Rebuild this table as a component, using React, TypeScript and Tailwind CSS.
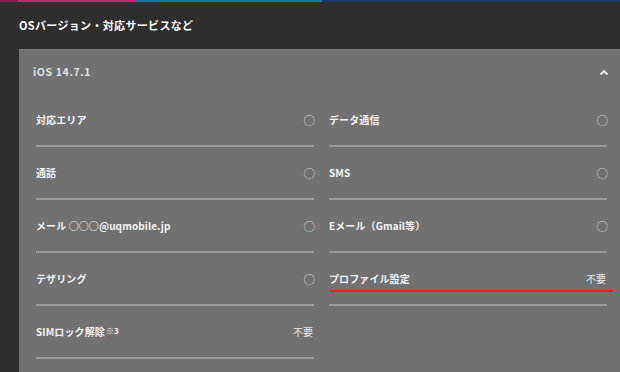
const FONT = { fontFamily: '"Noto Sans CJK JP", "Noto Sans", sans-serif' };

type Item = { label: React.ReactNode; value: string; mark?: boolean };

const ITEMS: Item[] = [
  { label: '対応エリア', value: '○' },
  { label: 'データ通信', value: '○' },
  { label: '通話', value: '○' },
  { label: 'SMS', value: '○' },
  { label: 'メール ○○○@uqmobile.jp', value: '○' },
  { label: 'Eメール（Gmail等）', value: '○' },
  { label: 'テザリング', value: '○' },
  { label: 'プロファイル設定', value: '不要', mark: true },
  {
    label: (
      <>
        SIMロック解除<sup className="text-[8px] relative -top-[2px] ml-[1px]">※3</sup>
      </>
    ),
    value: '不要',
  },
];

function Row({ item }: { item: Item }) {
  const isMark = item.value === '○';
  return (
    <div className="relative h-[53px] flex items-center justify-between border-b-2 border-[#9a9a9a] pb-[1px]">
      <span className="text-[10px] font-bold text-[#f4f4f4] tracking-[0.01em]">{item.label}</span>
      <span
        className={
          isMark
            ? 'text-[11.5px] text-[#d6d6d6] leading-none relative top-[2px] -mr-[1px]'
            : 'text-[10px] text-[#ececec] pr-[1px]'
        }
      >
        {item.value}
      </span>
      {item.mark && <div className="absolute left-0 -right-[6px] top-[37px] h-[2px] bg-[#e8221e]" />}
    </div>
  );
}

export default function App() {
  return (
    <div className="w-[620px] h-[372px] overflow-hidden bg-[#2e2e2e]" style={FONT}>
      <div className="flex h-[2px]">
        <div className="w-[18px] bg-[#8c1f55]" />
        <div className="w-[118px] bg-[#c8246f]" />
        <div className="w-[186px] bg-[#1f74a6]" />
        <div className="flex-1 bg-[#1e3a6c]" />
      </div>
      <div className="h-[47px] flex items-center pl-[19px]">
        <h2 className="text-[11px] font-bold text-white tracking-[0.03em]">OSバージョン・対応サービスなど</h2>
      </div>
      <div className="ml-[19px] bg-[#717171] border-t border-[#7c7c7c] pl-[17px] pr-[13px] h-full">
        <div className="h-[44px] flex items-center justify-between -ml-[3px]">
          <span className="text-[10.5px] font-bold text-[#e2e2e2] tracking-[0.06em]">iOS 14.7.1</span>
          <svg width="10" height="7" viewBox="0 0 10 7" className="mr-[-2px]">
            <path d="M1.5 5.5 L5 2 L8.5 5.5" fill="none" stroke="#f2f2f2" strokeWidth="1.8" />
          </svg>
        </div>
        <div className="grid grid-cols-2 gap-x-[15px]">
          {ITEMS.map((item, i) => (
            <Row key={i} item={item} />
          ))}
        </div>
      </div>
    </div>
  );
}
